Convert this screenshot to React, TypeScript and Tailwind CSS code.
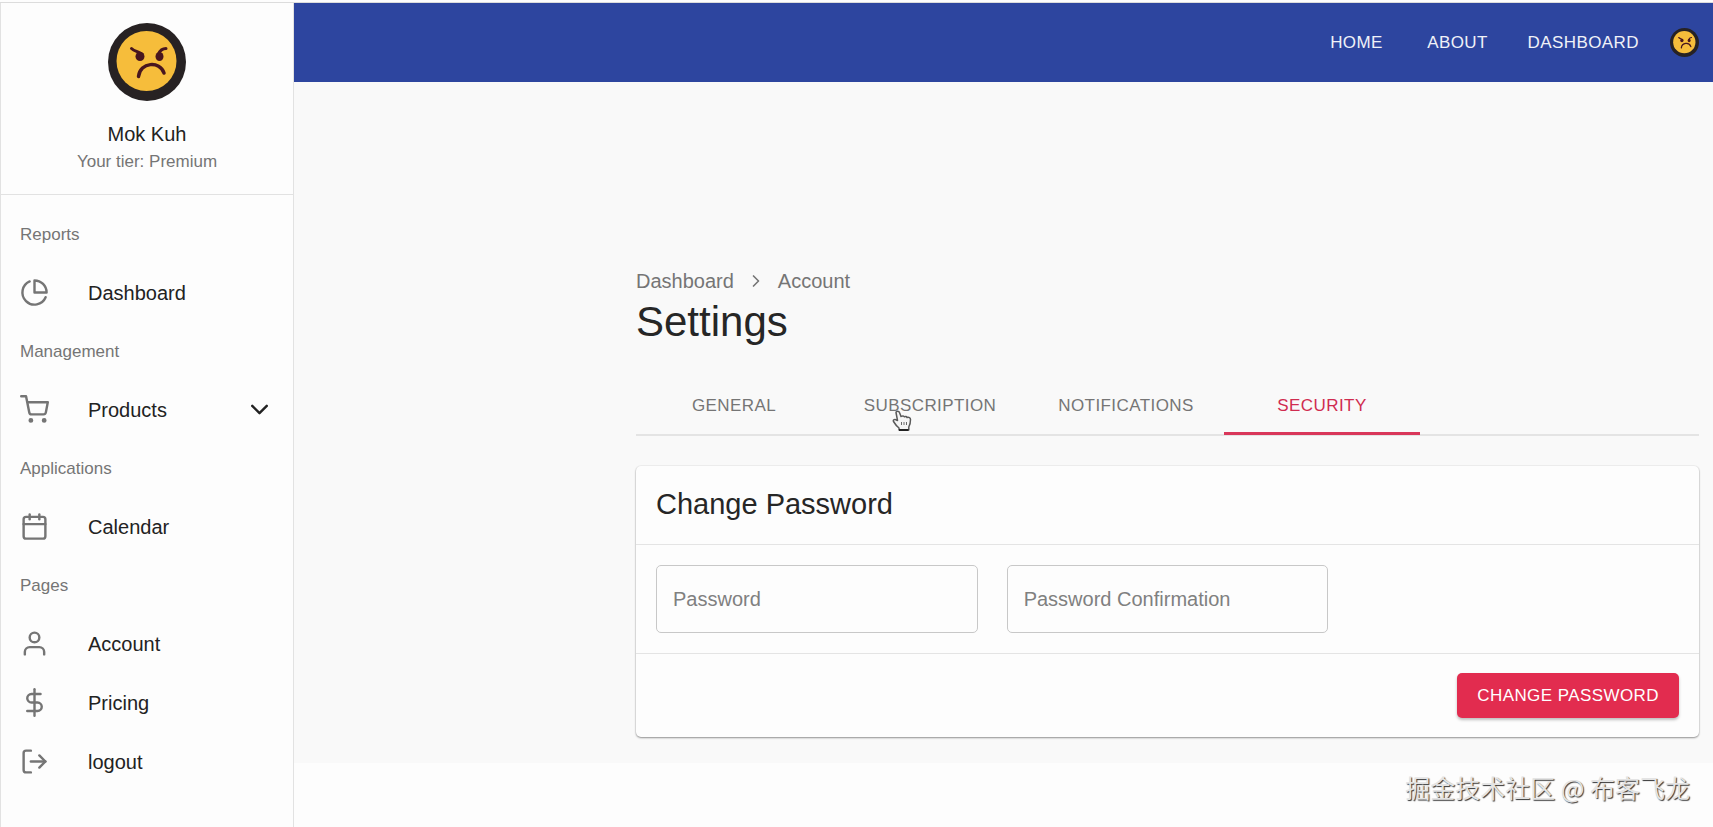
import React, { useState } from 'react';
import { FiPieChart, FiShoppingCart, FiCalendar, FiUser, FiDollarSign, FiLogOut, FiChevronDown, FiChevronRight } from 'react-icons/fi';
import type { IconType } from 'react-icons';

interface NavItem {
  title: string;
  icon: IconType;
  expandable?: boolean;
}

interface NavSection {
  subheader: string;
  items: NavItem[];
}

const sections: NavSection[] = [
  { subheader: 'Reports', items: [{ title: 'Dashboard', icon: FiPieChart }] },
  { subheader: 'Management', items: [{ title: 'Products', icon: FiShoppingCart, expandable: true }] },
  { subheader: 'Applications', items: [{ title: 'Calendar', icon: FiCalendar }] },
  {
    subheader: 'Pages',
    items: [
      { title: 'Account', icon: FiUser },
      { title: 'Pricing', icon: FiDollarSign },
      { title: 'logout', icon: FiLogOut },
    ],
  },
];

const tabs = ['General', 'Subscription', 'Notifications', 'Security'];

const AngryAvatar: React.FC<{ className: string }> = ({ className }) => (
  <svg viewBox="0 0 78 78" className={className} role="img" aria-label="Mok Kuh">
    <circle cx="39" cy="39" r="39" fill="#272223" />
    <circle cx="38.5" cy="38" r="30" fill="#f6bd3b" />
    <g fill="none" stroke="#48161f" strokeLinecap="round">
      <path d="M23.5 25.5c2.5 2.5 6 3 10.5 5.5" strokeWidth="3" />
      <path d="M58 25.5c-3.5 0-6 2-7.5 5.5" strokeWidth="3" />
      <path d="M30.5 53.5c1.5-14.5 21.5-16 25.5-3.5" strokeWidth="3.5" />
    </g>
    <ellipse cx="32" cy="33.5" rx="4.5" ry="4.5" fill="#48161f" />
    <ellipse cx="51.5" cy="33.5" rx="4" ry="4.5" fill="#48161f" />
  </svg>
);

const HandCursor = () => (
  <svg viewBox="0 0 20 22" className="absolute left-[60px] top-[34px] h-[22px] w-5" aria-hidden="true">
    <path
      d="M4 2.5c0-1.8 3-1.8 3.5 0l1.5 4c1.5-1 3-.7 3.5.3 1-.7 2.2-.3 2.5.7 1.8-.6 3.5.2 3.5 2 0 3.5-.3 5-1.7 7.5V20H7v-2c-2.5-2-4-4-5.5-6.5-.8-1.7 1.5-2.8 2.8-1.5L5.5 10.5z"
      fill="#f5f5f5"
      stroke="#5a5a5a"
      strokeWidth="1.5"
      strokeLinejoin="round"
    />
    <path d="M9.5 12v3M12 12v3M14.5 12v3" stroke="#6a6a6a" strokeWidth="1" />
    <path d="M7 20h9.5" stroke="#222" strokeWidth="2" />
  </svg>
);

const Sidebar = () => (
  <aside className="w-[294px] shrink-0 border-x border-[#e2e2e2] bg-[#fdfdfd]">
    <div className="flex flex-col items-center border-b border-[#e2e2e2] pt-5 pb-[18px]">
      <AngryAvatar className="size-[78px]" />
      <p className="mt-[19px] text-[20px] leading-[28px] text-[#222]">Mok Kuh</p>
      <p className="text-[17px] leading-[28px] text-[#757575]">Your tier: Premium</p>
    </div>
    <nav className="flex flex-col gap-[2px] pt-3">
      {sections.map((section) => (
        <div key={section.subheader}>
          <h3 className="flex h-[56px] items-center px-[19px] text-[17px] text-[#757575]">{section.subheader}</h3>
          <ul>
            {section.items.map(({ title, icon: Icon, expandable }) => (
              <li key={title}>
                <a href="#" className="flex h-[59px] items-center px-[19px] text-[20px] text-[#222]">
                  <Icon className="mr-[39px] size-[29px] text-[#757575]" />
                  <span className="flex-1">{title}</span>
                  {expandable && <FiChevronDown className="size-[29px]" />}
                </a>
              </li>
            ))}
          </ul>
        </div>
      ))}
    </nav>
  </aside>
);

const TopBar = () => (
  <header className="flex h-[79px] items-center justify-end gap-[23px] bg-[#2d459f] pr-[14px] text-[17px] tracking-wide text-[#f0f2f8] uppercase">
    <a href="#" className="min-w-[78px] px-2 text-center">Home</a>
    <a href="#" className="min-w-[78px] px-2 text-center">About</a>
    <a href="#" className="min-w-[78px] px-2 text-center">Dashboard</a>
    <AngryAvatar className="size-[29px]" />
  </header>
);

// The label sits inside the box until something is typed
const PasswordField: React.FC<{ id: string; label: string }> = ({ id, label }) => (
  <div className="relative">
    <input
      id={id}
      type="password"
      placeholder=" "
      className="peer block h-[68px] w-full rounded-[5px] border border-[#c8c8c8] bg-transparent px-[17px] text-[20px] text-[#222] focus:outline-none"
    />
    <label
      htmlFor={id}
      className="pointer-events-none absolute inset-y-0 left-[17px] hidden items-center text-[20px] text-[#808080] peer-placeholder-shown:flex"
    >
      {label}
    </label>
  </div>
);

const App: React.FC = () => {
  const [currentTab, setCurrentTab] = useState('Security');

  return (
    <div className="flex min-h-screen flex-col bg-[#fdfdfd] font-['Liberation_Sans',Arial,sans-serif]">
      <div className="h-[3px] border-b border-[#dcdcdc]" />
      <div className="flex flex-1">
        <Sidebar />
        <main className="flex min-w-0 flex-1 flex-col">
          <TopBar />
          <section className="bg-[#f9f9f9] pt-[184px] pr-[14px] pb-[26px] pl-[342px]">
            <nav className="flex items-center text-[20px] leading-[30px] text-[#757575]" aria-label="Breadcrumb">
              <a href="#">Dashboard</a>
              <FiChevronRight className="mx-3 size-5" />
              <a href="#">Account</a>
            </nav>
            <h1 className="text-[42px] leading-[52px] text-[#262626]">Settings</h1>

            <div className="mt-7 flex border-b-2 border-[#e4e4e4]" role="tablist">
              {tabs.map((tab) => (
                <button
                  key={tab}
                  role="tab"
                  aria-selected={currentTab === tab}
                  onClick={() => setCurrentTab(tab)}
                  className={`relative -mb-px h-[59px] w-[196px] border-b-[3px] pt-1 text-[17px] tracking-wide uppercase ${
                    currentTab === tab ? 'border-[#d9375a] text-[#d02c50]' : 'border-transparent text-[#757575]'
                  }`}
                >
                  {tab}
                  {tab === 'Subscription' && <HandCursor />}
                </button>
              ))}
            </div>

            <form
              onSubmit={(e) => e.preventDefault()}
              className="mt-[30px] rounded-[5px] bg-[#fdfdfd] shadow-[0_0_0_1px_rgba(0,0,0,0.03),0_1px_2px_rgba(0,0,0,0.4)]"
            >
              <h2 className="border-b border-[#e4e4e4] px-5 pt-[19px] pb-[21px] text-[29px] leading-[38px] text-[#262626]">Change Password</h2>
              <div className="grid grid-cols-3 gap-[29px] border-b border-[#e4e4e4] px-5 py-5">
                <PasswordField id="password" label="Password" />
                <PasswordField id="password-confirm" label="Password Confirmation" />
              </div>
              <div className="flex justify-end px-5 py-[19px]">
                <button
                  type="submit"
                  className="h-[45px] rounded-[5px] bg-[#e22c4f] px-5 text-[17px] tracking-wide text-white uppercase shadow-[0_2px_3px_rgba(0,0,0,0.25)]"
                >
                  Change Password
                </button>
              </div>
            </form>
          </section>
          <footer className="flex flex-1 items-start justify-end pt-[6px] pr-[23px]">
            <p className="font-['Noto_Sans_CJK_SC',sans-serif] text-[25px] leading-[36px] text-[#e4e4e4] [text-shadow:1px_1px_1px_#333]">
              掘金技术社区 @ 布客飞龙
            </p>
          </footer>
        </main>
      </div>
    </div>
  );
};

export default App;
